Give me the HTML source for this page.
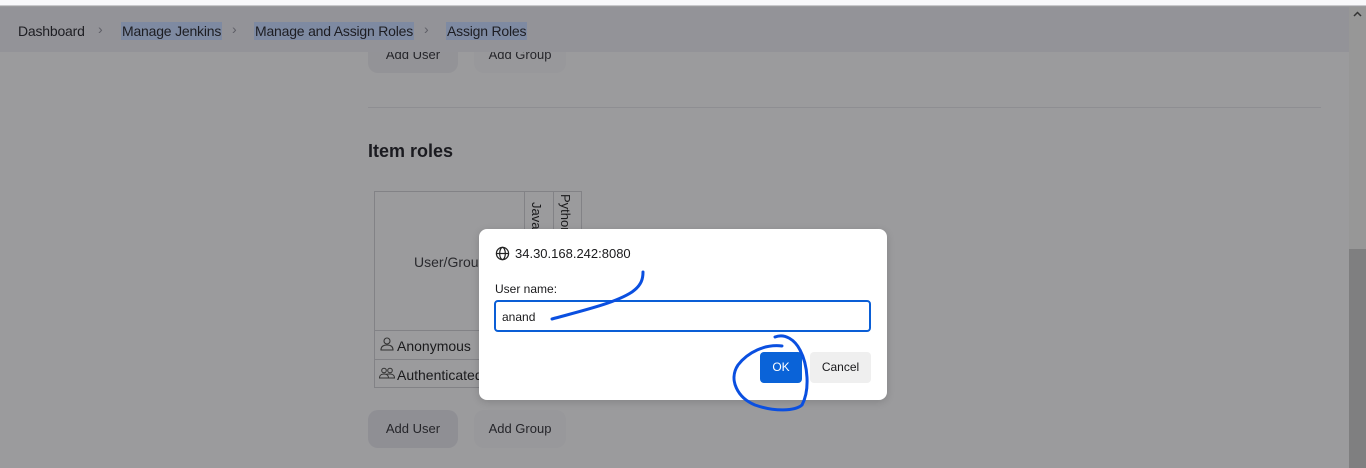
<!DOCTYPE html>
<html><head><meta charset="utf-8"><style>
*{margin:0;padding:0;box-sizing:border-box}
body{width:1366px;height:468px;overflow:hidden;background:#9b9b9d;font-family:"Liberation Sans",sans-serif;position:relative;color:#1a1a1c}
.abs{position:absolute}
.top{left:0;top:0;width:1366px;height:6px;background:#f8f8fa;border-bottom:1px solid #c8c8cc}
.hdr{left:0;top:7px;width:1349px;height:45px;background:#939398}
.crumb{top:22px;font-size:14px;color:#1d1d22;line-height:18px;letter-spacing:-0.2px}
.sel{background:#7e8aa2;padding:0 1px}
.sep{top:21px;font-size:14px;color:#5e5e66}
.sb{left:1349px;top:7px;width:17px;height:461px;background:#979797}
.thumb{left:1349px;top:249px;width:17px;height:219px;background:#7f7f80}
.btn{border-radius:10px;font-size:13px;color:#25252a;text-align:center;line-height:38px;height:38px}
.tbl{left:374px;top:191px;width:208px;height:197px;border:1px solid #828286}
.dlg{left:479px;top:229px;width:408px;height:171px;background:#fff;border-radius:8px;box-shadow:0 2px 8px rgba(0,0,0,.15)}
</style></head><body>
<div class="abs top"></div>
<div class="abs hdr"></div>
<div class="abs crumb" style="left:18px">Dashboard</div>
<div class="abs sep" style="left:98px">&#8250;</div>
<div class="abs crumb sel" style="left:121px">Manage Jenkins</div>
<div class="abs sep" style="left:232px">&#8250;</div>
<div class="abs crumb sel" style="left:254px">Manage and Assign Roles</div>
<div class="abs sep" style="left:424px">&#8250;</div>
<div class="abs crumb sel" style="left:446px">Assign Roles</div>
<div class="abs sb"></div><div class="abs thumb"></div>
<svg class="abs" style="left:1353px;top:11px" width="9" height="6" viewBox="0 0 9 6"><path d="M1 5 L4.5 1.5 L8 5" stroke="#333" stroke-width="1.5" fill="none"/></svg>
<div class="abs btn" style="left:368px;top:52px;width:90px;height:21px;line-height:6px;background:#939397;border-radius:0 0 10px 10px;overflow:hidden">Add User</div>
<div class="abs btn" style="left:474px;top:52px;width:92px;height:21px;line-height:6px;background:#98989b;border-radius:0 0 10px 10px;overflow:hidden">Add Group</div>
<div class="abs" style="left:368px;top:107px;width:953px;height:1px;background:#8e8e92"></div>
<div class="abs" style="left:368px;top:141px;font-size:18px;font-weight:bold;color:#1b1b20">Item roles</div>
<div class="abs tbl">
 <div class="abs" style="left:149px;top:0;width:1px;height:138px;background:#828286"></div>
 <div class="abs" style="left:178px;top:0;width:1px;height:138px;background:#828286"></div>
 <div class="abs" style="left:0;top:138px;width:206px;height:1px;background:#828286"></div>
 <div class="abs" style="left:0;top:167px;width:206px;height:1px;background:#828286"></div>
 <div class="abs" style="left:39px;top:62px;font-size:14px;color:#2a2a2e">User/Group</div>
 <div class="abs" style="left:154px;top:10px;writing-mode:vertical-rl;font-size:13px">Java</div>
 <div class="abs" style="left:183px;top:2px;writing-mode:vertical-rl;font-size:13px">Python</div>
 <svg class="abs" style="left:5px;top:145px" width="14" height="14" viewBox="0 0 14 14" fill="none" stroke="#333" stroke-width="1.1"><circle cx="7" cy="4" r="3"/><path d="M1 13 C1 9 4 8 7 8 C10 8 13 9 13 13 Z"/></svg>
 <div class="abs" style="left:22px;top:146px;font-size:14px">Anonymous</div>
 <svg class="abs" style="left:4px;top:175px" width="16" height="13" viewBox="0 0 16 13" fill="none" stroke="#333" stroke-width="1"><circle cx="5" cy="3.5" r="2.3"/><circle cx="11" cy="3.5" r="2.3"/><path d="M0.5 11 C0.5 8 3 7 5 7 C7 7 9.5 8 9.5 11 Z"/><path d="M7 7.5 C8 7 9.5 7 11 7 C13 7 15.5 8 15.5 11 L10 11"/></svg>
 <div class="abs" style="left:22px;top:175px;font-size:14px">Authenticated</div>
</div>
<div class="abs btn" style="left:368px;top:410px;width:90px;background:#8f8f94">Add User</div>
<div class="abs btn" style="left:474px;top:410px;width:92px;background:#98989b">Add Group</div>
<div class="abs dlg">
 <svg class="abs" style="left:16px;top:17px" width="15" height="15" viewBox="0 0 16 16" fill="none" stroke="#222" stroke-width="1.3"><circle cx="8" cy="8" r="6.5"/><ellipse cx="8" cy="8" rx="3" ry="6.5"/><line x1="1.5" y1="8" x2="14.5" y2="8"/></svg>
 <div class="abs" style="left:36px;top:17px;font-size:13px">34.30.168.242:8080</div>
 <div class="abs" style="left:16px;top:53px;font-size:12px">User name:</div>
 <div class="abs" style="left:15px;top:71px;width:377px;height:32px;border:2px solid #0a5ed6;border-radius:4px;font-size:12px;padding:8px 6px">anand</div>
 <div class="abs" style="left:281px;top:123px;width:42px;height:31px;background:#0a63d8;border-radius:4px;color:#fff;font-size:12px;text-align:center;line-height:31px">OK</div>
 <div class="abs" style="left:331px;top:123px;width:61px;height:31px;background:#efefef;border-radius:4px;font-size:12px;text-align:center;line-height:31px">Cancel</div>
</div>
<svg class="abs" style="left:0;top:0" width="1366" height="468" fill="none" stroke="#0a4fe0" stroke-width="3" stroke-linecap="round">
<path d="M552 319 C585 310 615 303 632 292 C642 285 643 278 643 272"/>
<path d="M782 346 C765 344 748 352 738 365 C728 380 738 398 755 405 C775 412 795 411 802 405 C810 390 808 365 800 350 C795 340 785 333 775 337"/>
</svg>
</body></html>
